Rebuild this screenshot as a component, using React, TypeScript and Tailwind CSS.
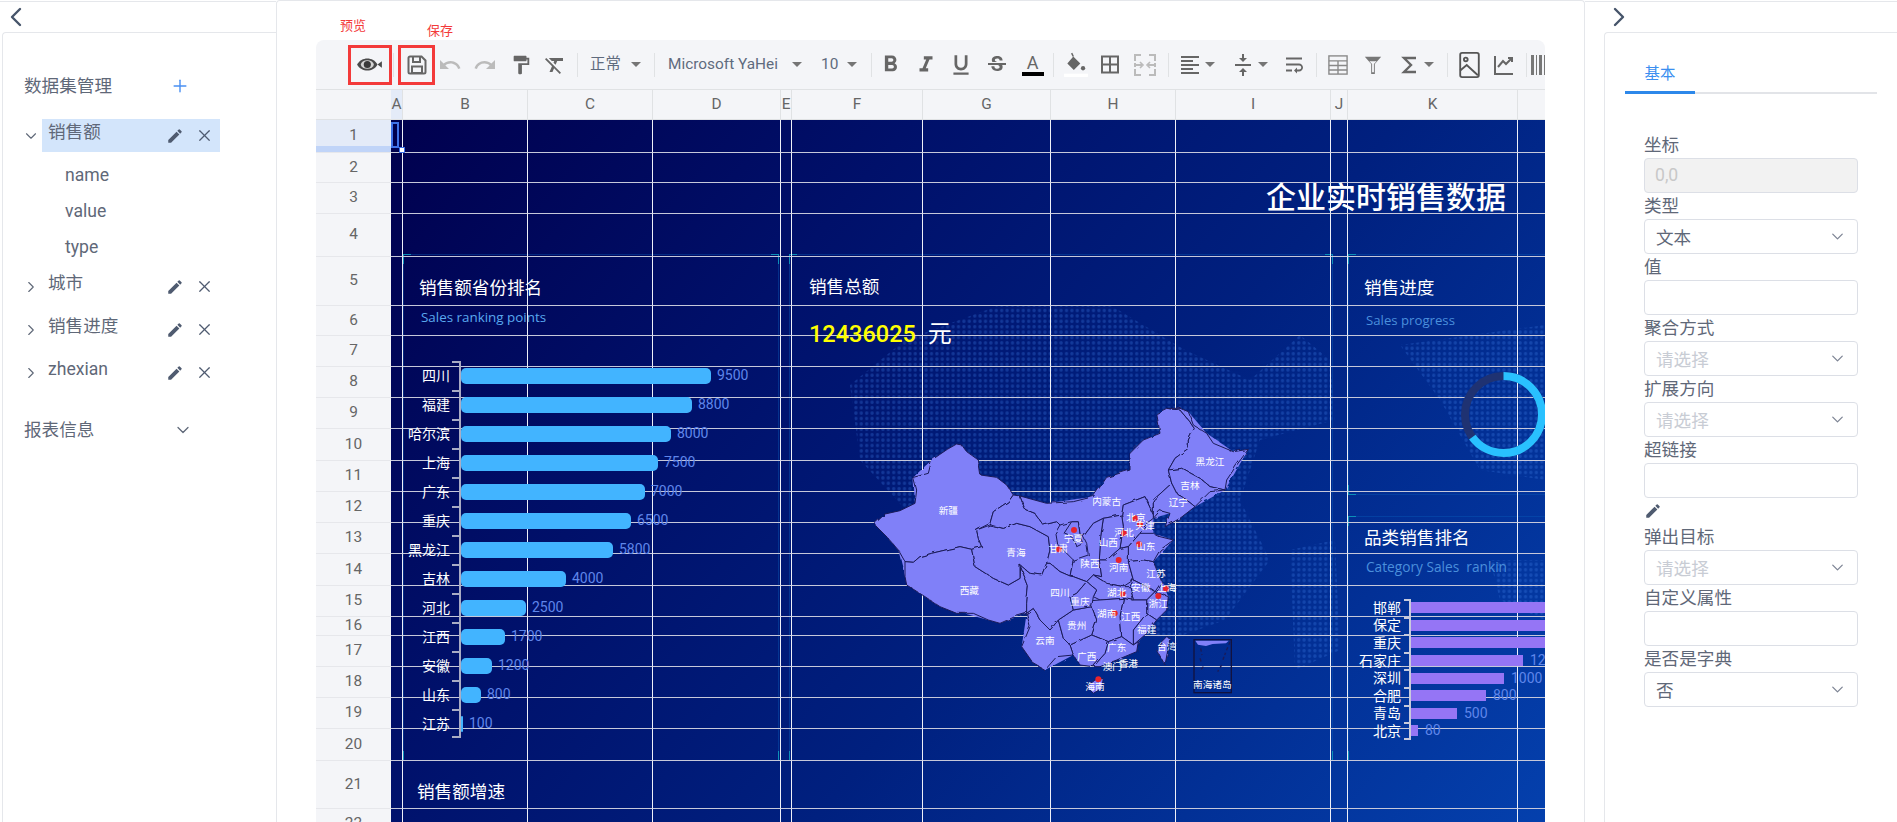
import { ChevronDown, ChevronLeft, ChevronRight, Plus, X } from 'lucide-react';
import {
  MdBorderAll, MdEdit, MdFormatAlignLeft, MdFormatBold, MdFormatClear, MdFormatItalic, MdFormatPaint,
  MdStrikethroughS, MdFormatUnderlined, MdRedo, MdUndo,
  MdVerticalAlignCenter, MdWrapText,
} from 'react-icons/md';
import type { ReactNode } from 'react';

const columns = ['A', 'B', 'C', 'D', 'E', 'F', 'G', 'H', 'I', 'J', 'K', ''];
const rowCount = 22;

const salesRank = [
  ['四川', 250, 9500], ['福建', 231, 8800], ['哈尔滨', 210, 8000], ['上海', 197, 7500], ['广东', 184, 7000],
  ['重庆', 170, 6500], ['黑龙江', 152, 5800], ['吉林', 105, 4000], ['河北', 65, 2500], ['江西', 44, 1700],
  ['安徽', 31, 1200], ['山东', 20, 800], ['江苏', 2, 100],
] as const;

// the first three bars run past the sheet's edge, their values are never seen
const categoryRank = [
  ['邯郸', 134, null], ['保定', 134, null], ['重庆', 134, null], ['石家庄', 112, 1200], ['深圳', 93, 1000],
  ['合肥', 75, 800], ['青岛', 46, 500], ['北京', 7, 80],
] as const;

// traced from the reference at 3x
const provinces = [
  '45,400 75,372 120,362 165,340 170,300 160,262 205,250 215,210 262,178 290,162 305,165 320,185 355,210 362,255 410,262 440,285 460,315 445,335 400,365 390,400 350,420 355,445 365,470 335,478 300,470 265,478 215,490 180,500 160,517 135,515 115,480 80,440 50,410',
  '135,515 160,517 180,500 215,490 265,478 300,470 335,478 345,530 400,565 445,585 480,565 482,530 505,590 500,640 500,670 465,680 420,700 385,690 340,670 290,670 240,650 195,620 140,585 135,560',
  '365,470 355,445 350,420 390,405 430,415 470,400 510,410 565,440 570,480 560,520 545,555 510,550 480,525 480,565 445,585 400,565 345,530 335,478',
  '390,400 400,365 445,335 460,315 480,318 495,358 525,370 550,405 590,395 600,405 585,430 590,460 600,470 640,510 630,558 600,545 570,520 560,520 570,480 565,440 510,410 470,400 430,415 390,405',
  '635,395 655,395 660,430 670,460 650,470 635,440 612,430',
  '480,318 560,340 640,335 700,320 740,262 810,240 810,190 850,150 900,130 890,70 920,55 960,60 985,90 1003,115 985,150 985,175 945,205 925,240 935,280 880,330 880,375 855,320 790,345 785,375 730,385 700,400 670,440 660,430 655,395 635,395 600,405 590,395 550,405 525,370 495,358',
  '920,55 960,55 985,65 1000,105 1040,130 1060,160 1120,185 1165,178 1130,225 1100,270 1095,300 1050,290 1020,265 965,235 925,240 945,205 985,175 985,150 1003,115 985,90 960,60',
  '925,240 965,235 1020,265 1050,290 1095,300 1050,305 1005,350 980,330 950,310 935,280',
  '935,280 950,310 980,330 1005,350 960,385 915,410 930,370 900,362 880,385 880,330',
  '785,375 790,345 855,320 880,375 880,385 860,400 840,430 805,470 780,475 790,410',
  '730,385 785,375 790,410 780,475 740,510 718,510 722,440',
  '805,470 840,430 880,430 900,440 940,450 900,480 880,515 850,510 805,515',
  '700,400 730,385 722,440 718,510 725,560 700,555 680,575 640,560 630,558 640,510 685,495 680,460 670,440',
  '718,510 740,510 780,475 805,470 805,515 820,570 790,590 740,580 700,555 725,560',
  '805,515 850,510 880,515 905,575 885,605 860,590 820,570',
  '820,570 860,590 885,605 860,630 820,630 810,590',
  '885,605 925,620 920,660 890,690 860,670 860,630',
  '860,670 890,690 860,730 820,765 820,720',
  '790,625 820,630 860,630 860,670 820,720 820,765 785,740 780,680',
  '680,575 700,555 740,580 790,590 810,590 820,630 790,625 720,630 700,620 710,600',
  '695,632 720,630 790,625 780,680 785,740 745,755 695,735 710,690 695,650',
  '745,755 785,740 820,765 835,755 830,785 770,810 720,830 700,830 735,790',
  '630,765 695,735 745,755 735,790 700,830 660,825 640,795',
  '500,670 520,655 540,690 570,720 595,690 610,745 630,765 640,795 590,800 555,840 520,820 485,770 510,710',
  '595,690 640,660 695,650 710,690 695,735 630,765 610,745',
  '480,525 510,550 545,555 560,520 570,520 600,545 630,558 640,560 680,575 650,610 630,620 640,660 595,690 570,720 540,690 520,655 500,670 500,640 505,590 482,530',
  '680,575 710,600 700,620 695,650 640,660 630,620 650,610',
  '920,740 930,745 915,825 893,785 900,760',
  '705,870 730,865 725,895 700,910 680,890',
];

const mapLabels: [string, number, number][] = [
  ['新疆', 265, 362], ['青海', 468, 487], ['西藏', 328, 603], ['四川', 600, 608], ['重庆', 660, 635], ['云南', 555, 753],
  ['贵州', 650, 707], ['广西', 680, 800], ['海南', 705, 890], ['澳门', 757, 830], ['香港', 805, 820], ['广东', 770, 772],
  ['台湾', 920, 770], ['南海诸岛', 1057, 884], ['福建', 860, 718], ['江西', 812, 680], ['湖南', 740, 670], ['湖北', 770, 607],
  ['安徽', 842, 593], ['上海', 920, 592], ['浙江', 895, 640], ['江苏', 888, 552], ['河南', 776, 532], ['陕西', 690, 520],
  ['山西', 745, 458], ['山东', 857, 470], ['河北', 792, 428], ['宁夏', 640, 445], ['甘肃', 595, 477], ['内蒙古', 740, 335],
  ['北京', 828, 382], ['天津', 855, 408], ['辽宁', 955, 337], ['吉林', 990, 288], ['黑龙江', 1050, 214],
];

const mapDots = [
  [642, 420], [597, 478], [826, 385], [840, 403], [792, 430], [837, 463], [776, 510], [918, 596], [895, 618],
  [788, 612], [764, 670], [715, 868],
];

function ChinaMap() {
  return (
    <svg viewBox="0 0 1260 960" className="absolute left-[469px] top-[270px] h-[320px] w-[420px]">
      <defs>
        {/* roughens the straight traced edges into a border-like line */}
        <filter id="rough" x="-5%" y="-5%" width="110%" height="110%">
          <feTurbulence type="fractalNoise" baseFrequency="0.035" numOctaves="2" seed="4" />
          <feDisplacementMap in="SourceGraphic" scale="10" />
        </filter>
      </defs>
      <g filter="url(#rough)">
        <polygon fill="#8080f8" points="45,400 165,340 160,262 215,210 290,162 355,210 362,255 460,315 560,340 700,320 740,262 810,240 810,190 850,150 900,130 890,70 920,55 985,65 1040,130 1120,185 1165,178 1095,300 1005,350 915,410 930,370 880,385 880,430 940,450 880,515 925,620 890,690 835,755 770,810 700,830 640,795 555,840 485,770 500,670 420,700 240,650 135,560 115,480" />
        {provinces.map(p => (
          <polygon key={p} points={p} fill="#8080f8" stroke="#1b1b58" strokeWidth="3" strokeLinejoin="round" />
        ))}
      </g>
      <rect x="1002" y="749" width="112" height="159" fill="none" stroke="#12123f" strokeWidth="4" />
      <path d="M1006 752h100l-8 8-40 2-20 6-24-4z" fill="#8080f8" />
      <path d="M1022 775l4 20M1020 805l4 12M1110 755l-16 40M1092 800l-4 12M1030 830l-8 10M1085 825l-12 20" stroke="#1b1b58" strokeWidth="4" strokeDasharray="10 8" fill="none" />
      {mapDots.map(([x, y]) => <circle key={`${x}-${y}`} cx={x} cy={y} r="9" fill="#e8242c" />)}
      {mapLabels.map(([name, x, y]) => (
        <text key={name} x={x} y={y + 10} textAnchor="middle" fontSize="29" fill="#fff">{name}</text>
      ))}
    </svg>
  );
}

function WorldDots() {
  return (
    <svg viewBox="391 120 1154 702" className="absolute inset-0 h-full w-full">
      <defs>
        <pattern id="dots" width="5.4" height="5.4" patternUnits="userSpaceOnUse">
          <circle cx="2.7" cy="2.7" r="1.7" fill="#3f7fe8" />
        </pattern>
      </defs>
      <g fill="url(#dots)" opacity="0.3">
        <polygon points="850,385 905,340 1000,305 1110,305 1185,350 1250,380 1300,335 1330,360 1335,420 1260,440 1240,500 1270,560 1225,620 1170,640 1060,610 1000,570 915,520 860,460" />
        <polygon points="1400,345 1545,325 1545,480 1480,470 1440,400" />
        <polygon points="1290,550 1335,540 1340,650 1295,670" />
        <polygon points="1490,560 1545,560 1545,620 1500,600" />
      </g>
    </svg>
  );
}

function Frame({ className }: { className: string }) {
  return (
    <div className={`absolute border border-[#0a5cb8]/40 ${className}`}>
      <span className="absolute -left-px -top-px h-[10px] w-[8px] border-l border-t border-[#0c90b8]" />
      <span className="absolute -right-px -top-px h-[10px] w-[8px] border-r border-t border-[#0c90b8]" />
      <span className="absolute -bottom-px -left-px h-[10px] w-[8px] border-b border-l border-[#0c90b8]" />
      <span className="absolute -bottom-px -right-px h-[10px] w-[8px] border-b border-r border-[#0c90b8]" />
    </div>
  );
}

function Caret({ className = '' }: { className?: string }) {
  return <span className={`h-0 w-0 shrink-0 border-x-[5px] border-t-[5px] border-x-transparent border-t-[#757575] ${className}`} />;
}

function Sep({ className = '' }: { className?: string }) {
  return <span className={`h-[24px] w-px shrink-0 bg-[#e0e2e4] ${className}`} />;
}

function Tool({ className, children }: { className: string; children: ReactNode }) {
  return <span className={`flex shrink-0 items-center justify-center text-[#666] ${className}`}>{children}</span>;
}

function Toolbar() {
  return (
    <div className="flex h-[49px] items-center rounded-t-lg bg-[#f4f5f8] pl-[32px] text-[15.4px] text-[#5f6b7e]">
      <Tool className="h-[40px] w-[44px] border-[3px] border-[#f33a3a]">
        <svg viewBox="0 0 26 16" className="h-[19px] w-[28px]">
          <path d="M1 8C5 0.5 16 0.5 20 8 16 15.5 5 15.5 1 8Z" fill="#4a4a4a" />
          <ellipse cx="10.5" cy="8" rx="6" ry="4" fill="#d4d4d4" />
          <circle cx="10.5" cy="8" r="3.3" fill="#3a3a3a" />
          <path d="M20 8l4-3v6z" fill="#4a4a4a" />
        </svg>
      </Tool>
      <Sep className="ml-px" />
      <Tool className="ml-[4px] h-[40px] w-[37px] border-[3px] border-[#f33a3a]">
        <svg viewBox="0 0 20 20" className="h-[20px] w-[20px]" fill="none" stroke="#666" strokeWidth="2">
          <path d="M1.5 3a1.5 1.5 0 0 1 1.5-1.5h11.5l4 4V17a1.5 1.5 0 0 1-1.5 1.5H3A1.5 1.5 0 0 1 1.5 17z" />
          <path d="M6 2v5h7V2" />
          <rect x="5" y="11.5" width="10" height="6.5" />
        </svg>
      </Tool>
      <Tool className="w-[30px] text-[#bbb]"><MdUndo size={24} /></Tool>
      <Tool className="w-[40px] text-[#bbb]"><MdRedo size={24} /></Tool>
      <Tool className="w-[32px]"><MdFormatPaint size={22} /></Tool>
      <Tool className="w-[36px]"><MdFormatClear size={24} /></Tool>
      <Sep className="ml-[4px]" />
      <span className="ml-[12px] w-[31px] shrink-0">正常</span>
      <Caret className="ml-[10px]" />
      <Sep className="ml-[13px]" />
      <span className="ml-[13px] w-[115px] shrink-0 whitespace-nowrap">Microsoft YaHei</span>
      <Caret className="ml-[9px]" />
      <span className="ml-[19px] w-[17px] shrink-0">10</span>
      <Caret className="ml-[9px]" />
      <Sep className="ml-[14px]" />
      <Tool className="ml-px w-[35px]"><MdFormatBold size={27} /></Tool>
      <Tool className="w-[35px]"><MdFormatItalic size={26} /></Tool>
      <Tool className="w-[36px]"><MdFormatUnderlined size={26} /></Tool>
      <Tool className="w-[36px]"><MdStrikethroughS size={24} /></Tool>
      <Tool className="w-[35px] flex-col">
        <span className="text-[18px] leading-[18px] text-[#666]">A</span>
        <span className="h-[4px] w-[22px] bg-black" />
      </Tool>
      <Sep className="ml-[3px]" />
      <Tool className="w-[44px]">
        <svg viewBox="0 0 24 24" className="h-[26px] w-[26px]">
          <path d="M8 1l1.5 3.2 6.5 6.3-6 6-6-6L9.5 4.2" fill="#666" />
          <path d="M8 1l1.5 3.2" stroke="#666" strokeWidth="1.4" />
          <circle cx="18.5" cy="15" r="2" fill="#666" />
          <rect x="1" y="20" width="22" height="3" fill="#fff" />
        </svg>
      </Tool>
      <Tool className="w-[24px]"><MdBorderAll size={25} /></Tool>
      <Tool className="w-[46px] text-[#bbb]">
        <svg viewBox="0 0 22 22" className="h-[22px] w-[22px]" fill="none" stroke="#bbb" strokeWidth="2">
          <path d="M1 7V1h6M15 1h6v6M21 15v6h-6M7 21H1v-6M1 11h7M14 11h7M1 9v4M21 9v4" />
          <path d="M6 8l3 3-3 3M16 8l-3 3 3 3" strokeWidth="1.6" />
        </svg>
      </Tool>
      <Sep />
      <Tool className="ml-[9px] w-[24px]"><MdFormatAlignLeft size={26} /></Tool>
      <Caret className="ml-[3px]" />
      <Tool className="ml-[16px] w-[24px]"><MdVerticalAlignCenter size={26} /></Tool>
      <Caret className="ml-[3px]" />
      <Tool className="ml-[14px] w-[24px]"><MdWrapText size={25} /></Tool>
      <Sep className="ml-[10px]" />
      <Tool className="ml-[9px] w-[24px]">
        <svg viewBox="0 0 22 22" className="h-[20px] w-[20px]" fill="none" stroke="#888" strokeWidth="1.5">
          <rect x="1" y="1" width="20" height="20" />
          <path d="M1 6.5h20M1 11.5h20M1 16.5h20M11 6.5V21" />
        </svg>
      </Tool>
      <Tool className="ml-[11px] w-[24px]">
        <svg viewBox="0 0 22 22" className="h-[20px] w-[20px]" fill="none" stroke="#666" strokeWidth="2">
          <path d="M2 2h18l-7 8v11h-4V10z" strokeWidth="0" fill="#777" />
          <path d="M7 7h8l-3 3v9h-2v-9z" fill="#f4f5f8" strokeWidth="0" />
        </svg>
      </Tool>
      <Tool className="ml-[12px] w-[24px]">
        <svg viewBox="0 0 24 24" className="h-[24px] w-[24px]" fill="none" stroke="#666" strokeWidth="2.4">
          <path d="M19 5H7l7 7-7 7h12" />
        </svg>
      </Tool>
      <Caret className="ml-[3px]" />
      <Sep className="ml-[13px]" />
      <Tool className="ml-[9px] w-[24px]">
        <svg viewBox="0 0 22 28" className="h-[26px] w-[21px]" fill="none" stroke="#555" strokeWidth="2">
          <rect x="1" y="1" width="20" height="26" rx="2" />
          <circle cx="7" cy="8" r="2" />
          <path d="M1 20l7-6 12 11" />
        </svg>
      </Tool>
      <Tool className="ml-[11px] w-[24px]">
        <svg viewBox="0 0 22 22" className="h-[22px] w-[22px]" fill="none" stroke="#666" strokeWidth="2">
          <path d="M2 2v18h18" />
          <path d="M5 13l5-6 3 3 6-6M15 4h4v4" />
        </svg>
      </Tool>
      <Sep className="ml-[10px]" />
      <Tool className="ml-[2px] w-[24px]">
        <svg viewBox="0 0 22 22" className="h-[22px] w-[22px]" fill="#777">
          <path d="M1 1h3v20H1zM6 1h1v20H6zM9 1h3v20H9zM14 1h1v20h-1zM17 1h2v20h-2zM20 1h1v20h-1z" />
        </svg>
      </Tool>
    </div>
  );
}

function Sheet() {
  return (
    <div className="ml-[39px] mt-[39px] w-[1229px] overflow-hidden">
      <Toolbar />
      <div className="flex h-[31px] border-y border-[#e0e2e4] bg-[#f4f5f8] text-[15.4px] text-[#666]">
        <div className="w-[75px] shrink-0" />
        <div className="grid flex-1 grid-cols-[12px_125px_125px_128px_11px_131px_128px_125px_155px_17px_170px_28px]">
          {columns.map((c, i) => (
            <div key={i} className={`flex items-center justify-center border-r border-[#e0e2e4] ${c === 'A' ? 'bg-[#e4ebf8]' : ''}`}>{c}</div>
          ))}
        </div>
      </div>
      <div className="flex h-[702px] overflow-hidden">
        <div className="grid w-[75px] shrink-0 grid-rows-[33px_30px_31px_43px_49px_30px_31px_31px_31px_32px_31px_31px_31px_32px_31px_19px_31px_31px_31px_32px_48px_31px] bg-[#f4f5f8] text-[15.4px] text-[#666]">
          {Array.from({ length: rowCount }, (_, i) => (
            <div key={i} className={`relative flex items-center justify-center border-b border-[#e6e7eb] ${i === 0 ? 'bg-[#e4ebf8]' : ''}`}>
              {i + 1}
              {i === 0 && <span className="absolute inset-x-0 bottom-0 h-[6px] bg-[#c0d4f8]" />}
            </div>
          ))}
        </div>
        <div className="relative w-[1155px] overflow-hidden bg-[linear-gradient(130deg,#00004e_0%,#00106a_30%,#00207f_58%,#0440ad_100%)]">
          <WorldDots />
          <Frame className="left-[12px] top-[134px] h-[507px] w-[376px]" />
          <Frame className="left-[398px] top-[134px] h-[507px] w-[544px]" />
          <Frame className="left-[957px] top-[134px] h-[241px] w-[300px]" />
          <Frame className="left-[957px] top-[396px] h-[245px] w-[300px]" />
          <div className="absolute inset-0 grid grid-cols-[12px_125px_125px_128px_11px_131px_128px_125px_155px_17px_170px_28px] grid-rows-[33px_30px_31px_43px_49px_30px_31px_31px_31px_32px_31px_31px_31px_32px_31px_19px_31px_31px_31px_32px_48px_31px]">
            {Array.from({ length: rowCount * columns.length }, (_, i) => (
              <div key={i} className="border-b border-r border-b-[#c6c8da] border-r-[#eef0f8]" />
            ))}
          </div>
          <Report />
          {/* selected cell */}
          <div className="absolute left-0 top-[2px] h-[26px] w-[8px] border-2 border-[#3f72e8]" />
          <div className="absolute left-[8px] top-[27px] h-[6px] w-[6px] border border-[#3f72e8] bg-white" />
        </div>
      </div>
    </div>
  );
}

function Report() {
  return (
    <div className="text-white">
      <h1 className="absolute left-[875px] top-[57px] whitespace-nowrap text-[30px] font-medium leading-[42px]">企业实时销售数据</h1>

      <h2 className="absolute left-[28px] top-[155px] text-[17.6px] leading-[26px]">销售额省份排名</h2>
      <p className="absolute left-[30px] top-[187px] whitespace-nowrap text-[13.4px] leading-[20px] text-[#5aa9ef] [font-family:'Open_Sans',sans-serif]">Sales ranking points</p>
      <div className="absolute left-0 top-[241px] w-[360px]">
        {salesRank.map(([name, width, value], i) => (
          <div key={name} className="flex h-[29px] items-center">
            <span className="w-[59px] shrink-0 whitespace-nowrap text-right text-[14px] leading-[14px]">{name}</span>
            <span className={`ml-[2px] h-[29px] w-[9px] shrink-0 border-r-2 border-t-2 border-[#a9acc4] ${i === salesRank.length - 1 ? 'border-b-2' : ''}`} />
            <span className="h-[16px] rounded-[5px] bg-[#42b4ff]" style={{ width }} />
            <span className="ml-[6px] text-[14px] text-[#5f86ea]">{value}</span>
          </div>
        ))}
      </div>
      <h2 className="absolute left-[26px] top-[659px] text-[17.6px] leading-[26px]">销售额增速</h2>

      <h2 className="absolute left-[418px] top-[154px] text-[17.6px] leading-[26px]">销售总额</h2>
      <div className="absolute left-[418px] top-[196px] flex items-center gap-[12px] whitespace-nowrap leading-[36px]">
        <span className="text-[23.5px] font-medium text-[#ffff00]">12436025</span>
        <span className="text-[24px]">元</span>
      </div>

      <ChinaMap />

      <h2 className="absolute left-[973px] top-[155px] text-[17.6px] leading-[26px]">销售进度</h2>
      <p className="absolute left-[975px] top-[190px] whitespace-nowrap text-[13.2px] leading-[20px] text-[#4a8fdc] [font-family:'Open_Sans',sans-serif]">Sales progress</p>
      <svg viewBox="0 0 85 85" className="absolute left-[1070px] top-[252px] h-[85px] w-[85px]">
        <circle cx="42.5" cy="42.5" r="38.5" fill="none" stroke="#1f3272" strokeWidth="8" />
        <circle cx="42.5" cy="42.5" r="38.5" fill="none" stroke="#29c1ff" strokeWidth="8" strokeDasharray="157 242" transform="rotate(-90 42.5 42.5)" />
      </svg>

      <h2 className="absolute left-[973px] top-[405px] text-[17.6px] leading-[26px]">品类销售排名</h2>
      <p className="absolute left-[975px] top-[437px] whitespace-pre text-[13.7px] leading-[20px] text-[#4a8fdc] [font-family:'Open_Sans',sans-serif]">Category Sales  rankin</p>
      <div className="absolute left-[950px] top-[479px] w-[204px] overflow-hidden">
        {categoryRank.map(([name, width, value], i) => (
          <div key={name} className="flex h-[17.6px] items-center">
            <span className="w-[60px] shrink-0 whitespace-nowrap text-right text-[14px] leading-[14px]">{name}</span>
            <span className={`ml-[3px] h-[17.6px] w-[7px] shrink-0 border-r-2 border-t-2 border-[#c8cadc] ${i === categoryRank.length - 1 ? 'border-b-2' : ''}`} />
            <span className="h-[11px] shrink-0 bg-[#9575f5]" style={{ width }} />
            {value !== null && <span className="ml-[7px] text-[14px] text-[#5f86ea]">{value}</span>}
          </div>
        ))}
      </div>
    </div>
  );
}

function DataRow({ label, open = false }: { label: string; open?: boolean }) {
  return (
    <div className={`flex items-center ${open ? '' : 'mb-[10px]'}`}>
      <span className="-ml-[2px] mr-[2px] flex w-[18px] justify-center">
        {open ? <ChevronDown size={20} strokeWidth={1.5} /> : <ChevronRight size={20} strokeWidth={1.5} />}
      </span>
      <div className={`flex h-[33px] w-[178px] items-center justify-between pl-[6px] pr-[6px] ${open ? 'bg-[#d3e5fb]' : ''}`}>
        <span className="-mt-[6px]">{label}</span>
        <span className="flex items-center gap-[11px] text-[#4f5b70]">
          <MdEdit size={18} />
          <X size={19} strokeWidth={1.5} />
        </span>
      </div>
    </div>
  );
}

function Field({ label, children }: { label: string; children: ReactNode }) {
  return (
    <div>
      <div className="h-[26px] text-[17.6px] leading-[26px]">{label}</div>
      {children}
    </div>
  );
}

function SelectBox({ value, placeholder = false }: { value: string; placeholder?: boolean }) {
  return (
    <div className={`flex h-[35px] items-center justify-between rounded border border-[#dcdfe6] pl-[11px] pr-[10px] text-[17.6px] ${placeholder ? 'text-[#c8ccd4]' : ''}`}>
      <span className="pt-[3px]">{value}</span>
      <ChevronDown size={19} strokeWidth={1.6} className="text-[#7d8494]" />
    </div>
  );
}

function TextBox() {
  return <div className="h-[35px] rounded border border-[#dcdfe6]" />;
}

export default function App() {
  return (
    <div className="flex h-[822px] w-[1897px] overflow-hidden bg-white text-[#5f6878] [font-family:Roboto,'Noto_Sans_CJK_SC',sans-serif]">
      {/* Left panel */}
      <aside className="mt-px w-[276px] shrink-0 border-t border-[#e5e7eb]">
        <div className="flex h-[30px] items-center text-[#46546a]"><ChevronLeft size={32} strokeWidth={1.8} /></div>
        <div className="ml-[2px] h-[790px] rounded-tl border-l border-t border-[#e5e7eb] pl-[21px] text-[17.6px]">
          <div className="mt-[38px] flex h-[30px] w-[166px] items-center justify-between">
            数据集管理
            <Plus size={20} strokeWidth={1.7} className="text-[#4a90f2]" />
          </div>
          <div className="mt-[18px]">
            <DataRow label="销售额" open />
            <div className="mb-[5px] mt-[5px] pl-[41px]">
              <div className="h-[36px] leading-[36px]">name</div>
              <div className="h-[36px] leading-[36px]">value</div>
              <div className="h-[36px] leading-[36px]">type</div>
            </div>
            <DataRow label="城市" />
            <DataRow label="销售进度" />
            <DataRow label="zhexian" />
          </div>
          <div className="mt-[26px] flex h-[30px] w-[169px] items-center justify-between">
            报表信息
            <ChevronDown size={20} strokeWidth={1.5} />
          </div>
        </div>
      </aside>

      {/* Center panel */}
      <main className="relative w-[1309px] shrink-0 rounded-t border-x border-t border-[#e5e7eb]">
        <span className="absolute left-[63px] top-[16px] text-[13px] leading-[18px] text-[#f33a3a]">预览</span>
        <span className="absolute left-[150px] top-[21px] text-[13px] leading-[18px] text-[#f33a3a]">保存</span>
        <Sheet />
      </main>

      {/* Right panel */}
      <aside className="mt-px flex-1 border-t border-[#e5e7eb]">
        <div className="flex h-[30px] items-center pl-[18px] text-[#46546a]"><ChevronRight size={32} strokeWidth={1.8} /></div>
        <div className="ml-[19px] h-[790px] rounded-tl border-l border-t border-[#e5e7eb] pl-[20px]">
          <div className="mr-[20px] mt-[26px] h-[35px] border-b-2 border-[#e2e4e8]">
            <div className="h-[35px] w-[70px] border-b-[3px] border-[#2d88ea] text-center text-[15.4px] leading-[30px] text-[#3b8ff0]">基本</div>
          </div>
          <div className="ml-[19px] mt-[38px] flex w-[214px] flex-col">
            <Field label="坐标">
              <div className="flex h-[35px] items-center rounded border border-[#dcdfe6] bg-[#f2f2f2] pl-[10px] text-[17.6px] text-[#c8c8c8]">0,0</div>
            </Field>
            <Field label="类型"><SelectBox value="文本" /></Field>
            <Field label="值"><TextBox /></Field>
            <Field label="聚合方式"><SelectBox value="请选择" placeholder /></Field>
            <Field label="扩展方向"><SelectBox value="请选择" placeholder /></Field>
            <Field label="超链接"><TextBox /></Field>
            <div className="flex h-[26px] items-center text-[#4f5b70]"><MdEdit size={18} /></div>
            <Field label="弹出目标"><SelectBox value="请选择" placeholder /></Field>
            <Field label="自定义属性"><TextBox /></Field>
            <Field label="是否是字典"><SelectBox value="否" /></Field>
          </div>
        </div>
      </aside>
    </div>
  );
}
